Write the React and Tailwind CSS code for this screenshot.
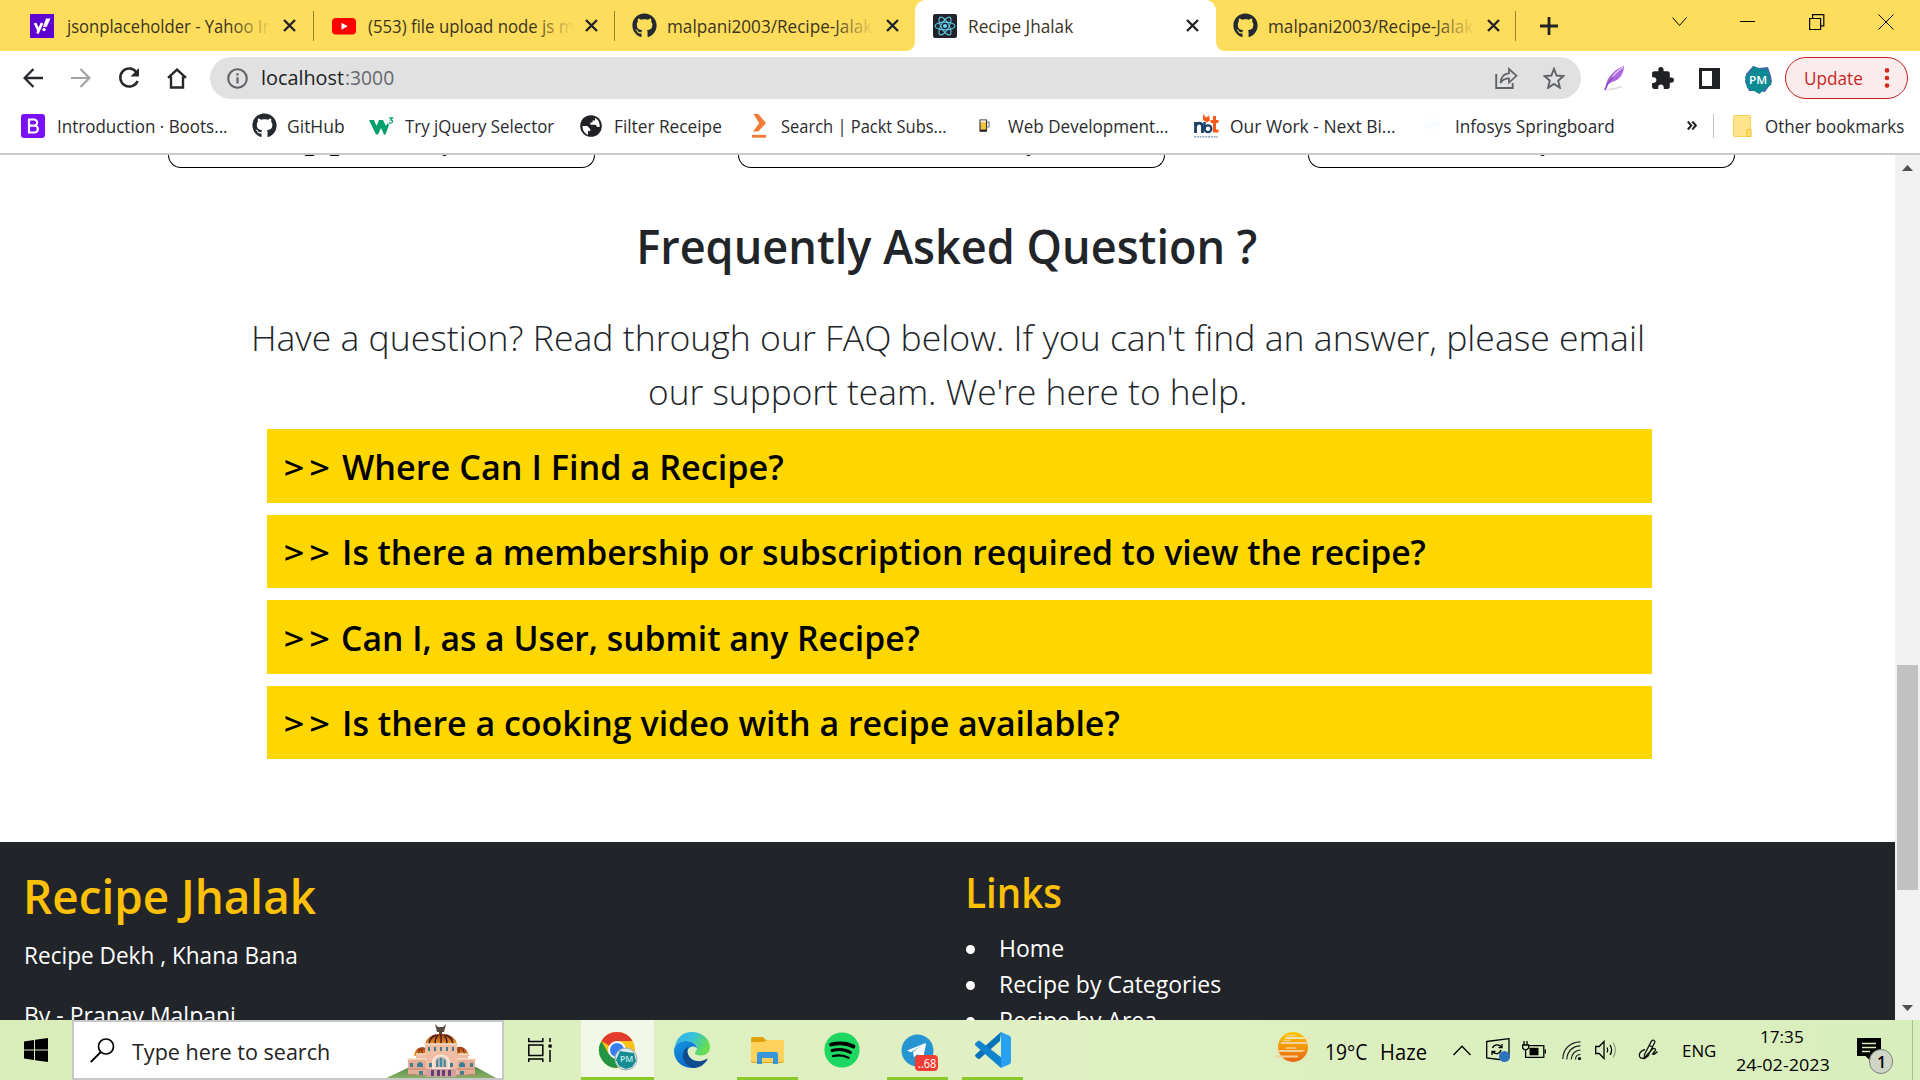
import React, { useLayoutEffect, useRef, useState } from "react";
import { FaGithub } from "react-icons/fa";
import { MdExtension } from "react-icons/md";

// Text whose inked glyphs fill exactly `w` pixels.
function Fit({ w, className = "", children }) {
  const ref = useRef(null);
  const [t, setT] = useState("none");
  useLayoutEffect(() => {
    const cs = getComputedStyle(ref.current);
    const ctx = document.createElement("canvas").getContext("2d");
    ctx.font = `${cs.fontWeight} ${cs.fontSize} ${cs.fontFamily}`;
    if (cs.letterSpacing !== "normal") ctx.letterSpacing = cs.letterSpacing;
    const m = ctx.measureText(children);
    const s = w / (m.actualBoundingBoxRight + m.actualBoundingBoxLeft);
    setT(`translateX(${m.actualBoundingBoxLeft * s}px) scaleX(${s})`);
  }, [w, children]);
  return (
    <span className={"block shrink-0 whitespace-nowrap " + className} style={{ width: w }}>
      <span ref={ref} className="inline-block origin-left whitespace-pre" style={{ transform: t }}>{children}</span>
    </span>
  );
}

const Svg = ({ w, h, vb, className = "", children }) => (
  <svg width={w} height={h} viewBox={vb || `0 0 ${w} ${h}`} preserveAspectRatio="none" fill="none" className={"block shrink-0 " + className}>{children}</svg>
);

const CloseX = () => (
  <Svg w={13} h={13}><path d="M1 1L12 12M12 1L1 12" stroke="#222326" strokeWidth="2.4" /></Svg>
);

const Yahoo = () => (
  <Svg w={24} h={24}>
    <rect width="24" height="24" fill="#5f01d1" />
    <path d="M5 9l3.4 7.2M12 9L7.4 19.5" stroke="#fff" strokeWidth="2.7" />
    <path d="M16 4.5h4.5L16.6 13H13z" fill="#fff" /><circle cx="14" cy="15.6" r="1.7" fill="#fff" />
  </Svg>
);
const Youtube = () => (
  <Svg w={24} h={24}><rect y="4" width="24" height="16.5" rx="4" fill="#f00" /><path d="M9.5 8.8v7l6-3.5z" fill="#fff" /></Svg>
);
const ReactIcon = () => (
  <Svg w={24} h={24}>
    <rect width="24" height="24" rx="2" fill="#20232a" />
    <g stroke="#61c9e6" strokeWidth="1.1"><ellipse cx="12" cy="12" rx="10" ry="3.9" /><ellipse cx="12" cy="12" rx="10" ry="3.9" transform="rotate(60 12 12)" /><ellipse cx="12" cy="12" rx="10" ry="3.9" transform="rotate(120 12 12)" /></g>
    <circle cx="12" cy="12" r="2" fill="#61dafb" />
  </Svg>
);
const Git = () => <FaGithub size={25} color="#24292f" className="shrink-0 -mr-px" />;

function Tab({ icon, text, w, active, pad = "pl-[17.5px]" }) {
  return (
    <div className={"relative flex h-[51px] w-[300.4px] shrink-0 items-center " + pad + (active ? " bg-white rounded-t-[11px]" : "")}>
      {active && (
        <>
          <Svg w={10} h={10} className="absolute -left-[10px] bottom-0"><path d="M10 0v10H0Q10 10 10 0" fill="#fff" /></Svg>
          <Svg w={10} h={10} className="absolute -right-[10px] bottom-0"><path d="M0 0v10h10Q0 10 0 0" fill="#fff" /></Svg>
        </>
      )}
      {icon}
      <div className="relative ml-[12px] w-[206px] overflow-hidden">
        <Fit w={w} className="text-[17.5px] leading-[28px] text-[#3a341f]">{text}</Fit>
        {!active && <div className="absolute right-0 top-0 h-full w-[42px] bg-linear-to-r from-[#ffdd5c]/0 to-[#ffdd5c]" />}
      </div>
      <div className="ml-[11.5px]"><CloseX /></div>
    </div>
  );
}
const Sep = () => <div className="-ml-px h-[30px] w-px shrink-0 bg-[#93812f]" />;

function TabStrip() {
  return (
    <div className="flex h-[51px] items-center bg-[#ffdd5c] pl-[14px]">
      <Tab icon={<Yahoo />} text="jsonplaceholder - Yahoo In" w={206} pad="pl-[15.5px]" /><Sep />
      <Tab icon={<Youtube />} text="(553) file upload node js m" w={205} /><Sep />
      <Tab icon={<Git />} text="malpani2003/Recipe-Jalak" w={205} />
      <Tab icon={<ReactIcon />} text="Recipe Jhalak" w={105} active />
      <Tab icon={<Git />} text="malpani2003/Recipe-Jalak" w={205} /><Sep />
      <Svg w={18} h={18} className="ml-[24px]"><path d="M9 0v18M0 9h18" stroke="#222326" strokeWidth="2.8" /></Svg>
      <div className="mb-[8px] ml-[114px] flex items-center text-black">
        <Svg w={15} h={9}><path d="M.5.5l7 8 7-8" stroke="#000" /></Svg>
        <Svg w={15} h={2} className="ml-[53px]"><path d="M0 .5h15" stroke="#000" /></Svg>
        <Svg w={16} h={16} className="ml-[54px]"><path d="M.6 4.5h11v11H.6zM3.6 4V.6h11.2v11.2H12" stroke="#000" strokeWidth="1.2" /></Svg>
        <Svg w={16} h={16} className="ml-[53px]"><path d="M.5.5l15 15M15.5.5l-15 15" stroke="#000" /></Svg>
      </div>
    </div>
  );
}

function Toolbar() {
  return (
    <div className="flex h-[54px] items-center bg-white pl-[23px]">
      <Svg w={20} h={20}><path d="M20 10H2M10.5 1L1.6 10l8.9 9" stroke="#26282b" strokeWidth="2.3" /></Svg>
      <Svg w={20} h={20} className="ml-[28px]"><path d="M0 10h18M9.5 1l8.9 9-8.9 9" stroke="#a3a3a3" strokeWidth="2.2" /></Svg>
      <Svg w={22} h={22} className="ml-[27px]"><path d="M18.5 5.2A9 9 0 1 0 19.6 14" stroke="#26282b" strokeWidth="2.5" /><path d="M21 1v8.500h-8.500z" fill="#26282b" /></Svg>
      <Svg w={20} h={21} className="ml-[27px]"><path d="M1 9.800L10 1.600l9 8.200M4 8.500v11h12v-11" stroke="#26282b" strokeWidth="2.400" /></Svg>
      <div className="ml-[23px] flex h-[42px] w-[1371px] items-center rounded-full bg-[#e1e1e1] pl-[17px]">
        <Svg w={21} h={21}><circle cx="10.5" cy="10.5" r="9.3" stroke="#5f6368" strokeWidth="2.1" /><path d="M10.5 9.200v6.300M10.500 5.200v2.200" stroke="#5f6368" strokeWidth="2.2" /></Svg>
        <div className="ml-[14px] flex text-[19.5px] leading-[30px]">
          <Fit w={82} className="text-[#202124]">localhost</Fit>
          <Fit w={48} className="ml-[2px] text-[#66696d]">:3000</Fit>
        </div>
        <Svg w={23} h={22} className="ml-[1101px]"><path d="M1.200 7v14h16.500v-5" stroke="#5f6368" strokeWidth="1.9" /><path d="M5.500 16C6 9.500 9.500 6.500 14 6.300V2l7.500 6.800-7.500 6.800v-4.200c-4 0-6.500 1.400-8.500 4.600z" stroke="#5f6368" strokeWidth="1.7" /></Svg>
        <Svg w={22} h={22} className="ml-[25px]" vb="1 1 22 21"><path d="M12 2.800l2.600 6.400 6.900.5-5.300 4.400 1.700 6.700-5.900-3.700-5.900 3.700 1.700-6.700-5.300-4.400 6.900-.5z" stroke="#5f6368" strokeWidth="1.9" /></Svg>
      </div>
      <Svg w={22} h={26} className="ml-[23px]">
        <path d="M2 20C3 12 11 4 20 1c0 7-4 14-12 16z" fill="#ab6bdc" /><path d="M5 17C8 12 13 6 19 2" stroke="#e6d0f7" strokeWidth="1.300" /><path d="M1 25C3 19 6 15 9 12" stroke="#8b3fc4" strokeWidth="1.600" /><path d="M3 24.500c6 0 11-1.500 15-3" stroke="#ddd" strokeWidth="1.500" />
      </Svg>
      <MdExtension size={25} color="#202124" className="ml-[24px] shrink-0" />
      <Svg w={21} h={21} className="ml-[24px]"><path d="M0 0h21v21H0zM3 3v15h10V3z" fill="#202124" fillRule="evenodd" /></Svg>
      <div className="relative ml-[24px] mt-[3px] flex h-[28px] w-[28px] items-center justify-center">
        <Svg w={28} h={30} className="absolute inset-0 -top-px"><path d="M2 9L9 1l6 2 9-1 3 9 1 6-7 10-7-1-9 0-4-9z" fill="#4169ae" /><path d="M9 1l7 3 8.500 1.500 1 8 2 6-7 4.500-5 5-7.500-4-5-2-1-8.500L1 12l6-5z" fill="#0b8a93" /></Svg>
        <Fit w={17} className="relative text-[11px] font-semibold leading-[28px] text-white">PM</Fit>
      </div>
      <div className="ml-[13px] flex h-[42px] w-[123px] items-center rounded-full border-[1.5px] border-[#c5221f] bg-[#faecec] pl-[19px]">
        <Fit w={57} className="text-[17.5px] leading-[28px] text-[#c5271f]">Update</Fit>
        <Svg w={6} h={20} className="ml-[22px]"><g fill="#d42a20"><circle cx="3" cy="2.4" r="2.3" /><circle cx="3" cy="10" r="2.3" /><circle cx="3" cy="17.6" r="2.3" /></g></Svg>
      </div>
    </div>
  );
}

function Bookmarks() {
  return (
    <div className="flex h-[50px] items-center border-b-2 border-[#cbcbcb] bg-white pb-[7px] pl-[21px] text-[17.5px] leading-[28px] text-[#2a2b2e]">
      <Svg w={24} h={24}><rect width="24" height="24" rx="3" fill="#7a10f7" /><path d="M8 5.500h5a3.100 3.100 0 0 1 0 6.200H8zM8 11.700h5.500a3.400 3.400 0 0 1 0 6.800H8z" stroke="#fff" strokeWidth="2.2" /></Svg>
      <Fit w={169} className="ml-[13px]">Introduction · Boots...</Fit>
      <div className="ml-[25px]"><Git /></div>
      <Fit w={56} className="ml-[12px]">GitHub</Fit>
      <Svg w={25} h={18} className="ml-[25px]"><path d="M0 3h5l2.500 6L10 3h4l3 6 1.800-3L20 8l-3.500 9.500H15L12 11l-3 6.500H7z" fill="#04a06b" /><path d="M20 .9h3.500L21.600 3c3 0 2.600 4-1.800 2.900" stroke="#04a06b" strokeWidth="1.2" /></Svg>
      <Fit w={149} className="ml-[11px]">Try jQuery Selector</Fit>
      <Svg w={22} h={22} className="ml-[26px]"><circle cx="11" cy="11" r="10.8" fill="#202124" /><path d="M2.500 11h4.800l3 3v2H8v4C4.500 18.500 2.500 15 2.500 11zM15 3c4 2 5 5.500 4.600 9h-2.200l-2-2.200h-5V7.600h2.200V5.400H15z" fill="#fff" /></Svg>
      <Fit w={106} className="ml-[13px]">Filter Receipe</Fit>
      <Svg w={15} h={24} className="ml-[31px]"><path d="M1.500 0h4.800l7.700 9-7.700 8.500H1l6.200-8.300z" fill="#f47b35" /><path d="M0 22.300h14" stroke="#f47b35" strokeWidth="2.8" /></Svg>
      <Fit w={165} className="ml-[14px]">Search | Packt Subs...</Fit>
      <Svg w={11} h={13} className="ml-[33px]"><rect x="1" y="1" width="6.5" height="11" fill="#f4c33d" stroke="#2c2c2c" strokeWidth="1.1" /><path d="M1.500 2.300h5.500" stroke="#eee" strokeWidth="1.800" /><path d="M7.500 3h2.500v5H7.500" stroke="#777" strokeWidth="1.1" /><path d="M1 11.600h6.500" stroke="#222" strokeWidth="2" /></Svg>
      <Fit w={160} className="ml-[18px]">Web Development...</Fit>
      <Svg w={25} h={24} className="ml-[26px]"><path d="M1.500 19V8M1.500 12c2-4 7-4 7 1v6" stroke="#1d4166" strokeWidth="2.8" /><path d="M10.500 8v7" stroke="#1d4166" strokeWidth="2.400" /><circle cx="14" cy="14.800" r="3.400" stroke="#1d4166" strokeWidth="2.300" /><path d="M9 6V0l3 3.500 3-2 1 5-3 2z" fill="#fa5a1c" /><path d="M20.500 2v15h4M16.500 7.500h8" stroke="#fa5a1c" strokeWidth="3" /><path d="M0 22.800h24" stroke="#7894ac" strokeWidth="1.3" strokeDasharray="2 .8" /></Svg>
      <Fit w={164} className="ml-[12px]">Our Work - Next Bi...</Fit>
      <Svg w={20} h={20} className="ml-[27px]"><circle cx="10" cy="10" r="9.5" fill="#fcfdff" /><path d="M4 11c4-3 5 3 7-2s4 1 5 0" stroke="#f3f6fb" /></Svg>
      <Fit w={158} className="ml-[14px]">Infosys Springboard</Fit>
      <Svg w={10} h={9} className="ml-[73px] mb-[1px]"><path d="M.8.5l3.500 4-3.500 4M5.300.5l3.500 4-3.500 4" stroke="#202124" strokeWidth="2" /></Svg>
      <div className="ml-[16px] h-[24px] w-px shrink-0 bg-[#c4c4c4]" />
      <Svg w={19} h={22} className="ml-[19px]"><rect x=".5" y=".5" width="17" height="21" rx="1" fill="#ffe48b" stroke="#f6d254" /><path d="M14 21.500V15l4-.7v7.200z" fill="#ffe06c" stroke="#ecc030" /></Svg>
      <Fit w={138} className="ml-[14px]">Other bookmarks</Fit>
    </div>
  );
}

// Descender tips of the card titles, as offsets and widths inside each card.
const cards = [
  [[135, 11], [160, 11], [273, 5]],
  [[287, 5]],
  [[231, 5]],
];
const faqs = [
  ["Where Can I Find a Recipe?", 441, "ml-[13px]"],
  ["Is there a membership or subscription required to view the recipe?", 1080, "ml-[16px]"],
  ["Can I, as a User, submit any Recipe?", 576, "ml-[14px]"],
  ["Is there a cooking video with a recipe available?", 774, "ml-[16px]"],
];
const links = [["Home", 62], ["Recipe by Categories", 220], ["Recipe by Area", 155]];

function Page() {
  return (
    <div className="flex h-[865px] w-[1895px] flex-col overflow-hidden bg-white text-[#212529]">
      <div className="flex h-[13px] shrink-0 gap-[143px] pl-[168px]">
        {cards.map((tips, i) => (
          <div key={i} className="h-[13px] w-[427px] overflow-hidden rounded-b-[14px] border border-t-0 border-black">
            <Svg w={425} h={2}>
              {tips.map(([x, w]) => <path key={x} d={`M${x} 0h${w}l-2 1h${4 - w}z`} fill="#000" />)}
            </Svg>
          </div>
        ))}
      </div>
      <h1 className="mt-[49px] flex justify-center pl-[2px] text-[47px] font-semibold leading-[58px]"><Fit w={617}>Frequently Asked Question ?</Fit></h1>
      <div className="mt-[36px] flex flex-col items-center text-[35px] font-[360] leading-[54px]">
        <Fit w={1388}>Have a question? Read through our FAQ below. If you can't find an answer, please email</Fit>
        <Fit w={595}>our support team. We're here to help.</Fit>
      </div>
      <div className="ml-[267px] mt-[10px] flex w-[1385px] flex-col gap-[12px]">
        {faqs.map(([q, w, ml]) => (
          <div key={q} className="flex h-[73.5px] items-center bg-[#ffd700] pl-[18px] pt-[2px] text-[35px] font-[560] leading-[54px] text-black">
            <Fit w={44} className="text-[31px] font-semibold tracking-[4px]">{">>"}</Fit>
            <Fit w={w} className={ml}>{q}</Fit>
          </div>
        ))}
      </div>
      <footer className="mt-[83px] flex h-[200px] shrink-0 bg-[#212529] pl-[26px] pt-[25px] text-white">
        <div className="w-[941px]">
          <Fit w={289} className="ml-px text-[47px] font-semibold leading-[58px] text-[#ffc107]">Recipe Jhalak</Fit>
          <Fit w={271} className="mt-[12px] text-[23.3px] leading-[36px]">Recipe Dekh , Khana Bana</Fit>
          <Fit w={209} className="mt-[24px] text-[23.3px] leading-[36px]">By - Pranav Malpani</Fit>
        </div>
        <div>
          <Fit w={93} className="ml-px text-[41px] font-semibold leading-[50px] text-[#ffc107]">Links</Fit>
          <ul className="mt-[13px]">
            {links.map(([l, w]) => (
              <li key={l} className="flex h-[36px] items-center gap-[26px] text-[23.3px] leading-[36px]">
                <span className="mt-[3px] h-[9px] w-[9px] -ml-px rounded-full bg-white" />
                <Fit w={w}>{l}</Fit>
              </li>
            ))}
          </ul>
        </div>
      </footer>
    </div>
  );
}

function Scrollbar() {
  return (
    <div className="flex h-[865px] w-[25px] flex-col items-center bg-[#f1f1f1]">
      <Svg w={11} h={6} className="mt-[10px]"><path d="M0 6L5.500 0 11 6z" fill="#505050" /></Svg>
      <div className="mt-[494px] h-[225px] w-[21px] bg-[#c1c1c1]" />
      <Svg w={11} h={6} className="mt-[115px]"><path d="M0 0l5.500 6L11 0z" fill="#505050" /></Svg>
    </div>
  );
}

const Palace = () => (
  <Svg w={118} h={57}>
    <defs>
      <linearGradient id="hill" x1="0" y1="0" x2="0" y2="1"><stop offset="0" stopColor="#4d8a45" /><stop offset="1" stopColor="#93b56c" /></linearGradient>
      <linearGradient id="dome" x1="0" y1="0" x2="0" y2="1"><stop offset="0" stopColor="#a33416" /><stop offset="1" stopColor="#f3a32a" /></linearGradient>
    </defs>
    <path d="M0 57L30 43h62l26 14z" fill="url(#hill)" />
    <path d="M53 1l3 3h5l3-3-2 8h-2v4h-3V9h-2z" fill="#57483f" />
    <path d="M43 22C44 7 74 7 75 22z" fill="url(#dome)" /><path d="M47 21c1-6 4-8 7-9M53 21c0-5 2-8 3-9M59 21V11M65 21c0-5-2-8-3-9M71 21c-1-6-4-8-7-9" stroke="#3e1d16" strokeWidth="1.4" />
    <path d="M32 33c1-10 10-10 13-7v7zM73 33v-7c3-4 12-3 14 7z" fill="url(#dome)" /><path d="M36 32l2-6M40 32v-6M77 32v-6M83 32l-2-6" stroke="#5b2717" />
    <path d="M43 21h32v12H43z" fill="#efbea2" /><path d="M42 21h34" stroke="#f9dcc5" strokeWidth="1.5" />
    <path d="M34 31h52v21H34z" fill="#edbca2" /><path d="M26 36h18v15H26zM76 36h17v15H76z" fill="#e4ad95" /><path d="M25 36h20M75 36h19M34 31h10M76 31h10" stroke="#f9dcc5" strokeWidth="1.6" />
    <g fill="#3b7d92"><path d="M46 24h2v4h-2zM52 24h2v4h-2zM58 24h2v4h-2zM64 24h2v4h-2zM70 24h2v4h-2z" /><path d="M35 44v-3q3-4 6 0v3zM77 44v-3q3-4 6 0v3zM37 48h4v4h-4zM78 48h4v4h-4zM28 40h3v4h-3zM88 40h3v4h-3zM47 40h3v4h-3zM68 40h3v4h-3z" /></g>
    <path d="M51 46v-7c0-9 16-9 16 0v7z" fill="#f4d3c4" stroke="#fbe8dc" strokeWidth="1.5" /><path d="M54 44v-5c0-6 10-6 10 0v5z" fill="#4a8898" /><path d="M57 35v9M61 35v9" stroke="#f6d7c8" />
    <path d="M44 46h30v8H44z" fill="#d2a0a0" /><path d="M49 47h3v6h-3zM55 47h3v6h-3zM60 47h3v6h-3zM66 47h3v6h-3z" fill="#624072" /><path d="M25 46h19M74 46h19M24 52h20M74 52h20" stroke="#c68677" />
  </Svg>
);

const Chrome = () => (
  <div className="relative">
    <Svg w={40} h={40} className="-mr-[1px]">
      <circle cx="19" cy="19" r="18" fill="#fbc116" />
      <path d="M19 19L3.400 10A18 18 0 0 1 34.600 10H19z" fill="#e33b2e" />
      <path d="M3.400 10A18 18 0 0 0 19 37l8-13.500-16 0z" fill="#229645" />
      <circle cx="19" cy="19" r="9" fill="#fff" /><circle cx="19" cy="19" r="7" fill="#3a7df0" />
      <circle cx="28" cy="28" r="11" fill="#dce9ec" stroke="#9cabad" /><path d="M22 20l6 1 8 1 2 8-4 6-6 2-7-3-3-6z" fill="#168b92" />
    </Svg>
    <Fit w={13} className="absolute left-[22px] top-[21px] text-[9px] font-semibold leading-[14px] text-[#c0ebea]">PM</Fit>
  </div>
);
const Edge = () => (
  <Svg w={36} h={36} className="-ml-[2px]">
    <defs>
      <linearGradient id="e1" x1="0" y1="0" x2="1" y2=".4"><stop offset="0" stopColor="#2db2ec" /><stop offset=".5" stopColor="#35c1db" /><stop offset="1" stopColor="#67de4f" /></linearGradient>
      <linearGradient id="e2" x1="0" y1="0" x2=".6" y2="1"><stop offset="0" stopColor="#1496e2" /><stop offset="1" stopColor="#0968c5" /></linearGradient>
    </defs>
    <path d="M1 15C2 6 9 0 18 0c10 0 18 7 18 15 0 5-4 8.500-9 8.500-4 0-6-1-6-2.500 0-1 2-2 2-5C23 12 18 9 12 9 6 9 2 12 1 15z" fill="url(#e1)" />
    <path d="M0 19C0 13 5 9 12 9c6 0 11 3.500 11 7.500-2-3-8-3-10 3-2 7 2 13 9 16C9 38 0 29 0 19z" fill="url(#e2)" />
    <path d="M14 15c-2 7 2 13 9 14 4 .6 7-.5 9.500-2 .8-.4 1.200.2.700 1C30 33 25 36 20 36 12 35 8 27 9 22c.5-3 2-6 5-7z" fill="#114a8e" />
  </Svg>
);
const Folder = () => (
  <Svg w={33} h={27}><path d="M0 2Q0 0 2 0h10l3 3h16q2 0 2 2v19q0 2-2 2H2q-2 0-2-2z" fill="#e3a20c" /><path d="M0 5h13l3-2h15q2 0 2 2v18q0 2-2 2H2q-2 0-2-2z" fill="#ffd25e" /><path d="M6 27V17q0-2 2-2h17q2 0 2 2v10h-5v-6H11v6z" fill="#3a96db" /></Svg>
);
const Spotify = () => (
  <Svg w={36} h={36}><circle cx="18" cy="18" r="17.6" fill="#1ed760" /><g stroke="#000" strokeLinecap="round"><path d="M7 12.500c8-2 16-1.500 22.500 2" strokeWidth="3.7" /><path d="M8 18.500c7-1.700 13.500-1 18.500 2" strokeWidth="3" /><path d="M9 24c6-1.300 11-.8 15.500 1.800" strokeWidth="2.3" /></g></Svg>
);
const Telegram = () => (
  <div className="relative">
    <Svg w={33} h={33}><circle cx="16.5" cy="16.5" r="16" fill="#2795d1" /><path d="M6 16.500L24 9.300q1.300-.4 1 1L22 24.500l-6-4.200-3 3-1-5.300 9-7L10 18.200z" fill="#fff" /></Svg>
    <div className="absolute left-[14px] top-[21px] flex h-[16px] w-[23px] items-center justify-center rounded-[4px] bg-[#f23c34]">
      <Fit w={18} className="text-[13px] leading-[16px] text-white">..68</Fit>
    </div>
  </div>
);
const VSCode = () => (
  <Svg w={36} h={36}><path d="M26 0l-1 9L5 26.500q-1.500 1-2.500 0l-2-2q-1-1 0-2z" fill="#0873b9" /><path d="M0 11.500l3-2.500q1-.8 2 0L27 26l-1 10L1 14q-1.500-1.200-1-2.500z" fill="#1184cf" /><path d="M26 0l8.500 3.800Q36 4.500 36 6v24q0 1.500-1.500 2.200L26 36z" fill="#29a1f2" /></Svg>
);

function TaskButton({ children, className = "", bar }) {
  return (
    <div className={"flex h-[60px] w-[61px] shrink-0 flex-col items-center " + className}>
      <div className="flex h-[57px] items-center pt-[3px]">{children}</div>
      <div className={"h-[3px] w-full " + (bar ? "bg-[#89c929]" : "")} />
    </div>
  );
}

function Taskbar() {
  return (
    <div className="flex h-[60px] w-full items-center bg-linear-to-r from-[#d9ecb9] via-[#e0f0c4] to-[#d9eebd] text-black">
      <Svg w={24} h={24} className="ml-[24px]"><path d="M0 3.500L10 2v9.500H0zM11 1.800L24 0v11.500H11zM0 12.500h10V22L0 20.600zM11 12.500h13V24l-13-1.800z" fill="#000" /></Svg>
      <div className="ml-[24px] flex h-[60px] w-[432px] items-center overflow-hidden border-2 border-[#c8c8c8] bg-white">
        <Svg w={25} h={25} className="ml-[16px]"><circle cx="16" cy="8.5" r="7.5" stroke="#000" strokeWidth="1.7" /><path d="M10.800 14L.8 24" stroke="#000" strokeWidth="1.8" /></Svg>
        <Fit w={197} className="ml-[17px] pt-[4px] text-[21.5px] leading-[32px] text-[#222]">Type here to search</Fit>
        <div className="ml-[53px] -mr-1 mt-[2px]"><Palace /></div>
      </div>
      <Svg w={24} h={24} className="ml-[24px]"><path d="M.8 0v3.500h14V0M.8 7h14v10.500h-14zM.8 24v-3h14v3M22 0v4M22 12v12" stroke="#000" strokeWidth="1.5" /><path d="M20.500 6.500h3.200v3.200h-3.200z" fill="#000" /></Svg>
      <div className="ml-[29px] flex h-[60px] w-[73px] shrink-0 flex-col bg-[#f2f8e7]">
        <div className="flex h-[57px] pl-[17px] pt-[11px]"><Chrome /></div>
        <div className="h-[3px] bg-[#89c929]" />
      </div>
      <TaskButton className="ml-[8px]"><Edge /></TaskButton>
      <TaskButton className="ml-[14px]" bar><Folder /></TaskButton>
      <TaskButton className="ml-[13px]"><Spotify /></TaskButton>
      <TaskButton className="ml-[15px]" bar><Telegram /></TaskButton>
      <TaskButton className="ml-[14px]" bar><VSCode /></TaskButton>
      <Svg w={36} h={32} className="mb-[6px] ml-[252px]">
        <defs><linearGradient id="sun" x1="0" y1="0" x2="0" y2="1"><stop offset="0" stopColor="#fbc800" /><stop offset="1" stopColor="#e96410" /></linearGradient></defs>
        <circle cx="18" cy="16" r="15" fill="url(#sun)" />
        <path d="M11 7h25" stroke="#f1e0ae" strokeWidth="2" strokeLinecap="round" /><path d="M7 12h25M3 20h24M1 25.500h21" stroke="#f3cf9c" strokeWidth="2" strokeLinecap="round" /><path d="M12 4.500h8M9 9.500h6M11 17h10M24 19.500h5" stroke="#f8d183" strokeWidth="1.300" strokeLinecap="round" />
      </Svg>
      <Fit w={41} className="ml-[15px] pt-[4px] text-[21.5px] leading-[32px]">19°C</Fit>
      <Fit w={44} className="ml-[15px] pt-[4px] text-[21.5px] leading-[32px]">Haze</Fit>
      <Svg w={18} h={11} className="ml-[27px]"><path d="M.5 10L9 1.200l8.500 8.800" stroke="#000" strokeWidth="1.3" /></Svg>
      <Svg w={25} h={24} className="ml-[15px]"><path d="M.7 3.500L23 .7v19L13 21.500.7 20z" stroke="#000" strokeWidth="1.3" /><path d="M6.500 10c1.500-4 7-4 9-1M16 6v3.500h-3.500M15 12c-1 4-6 5-8.500 1.500M6 17v-3.500h3.500" stroke="#000" strokeWidth="1.3" /><circle cx="18.500" cy="18.500" r="5.500" fill="#2d73bd" /></Svg>
      <Svg w={24} h={18} className="ml-[11px] mb-px"><path d="M5 4.700h16.800v11.600H3.600V9M23.400 8.500v4" stroke="#000" strokeWidth="1.3" /><path d="M7.500 6.800h9v7.500h-9z" fill="#000" /><path d="M2 0v4M5 0v4M.6 4h6v3q-3 3.600-6 0z" stroke="#000" strokeWidth="1.3" fill="#dfefc4" /></Svg>
      <Svg w={20} h={19} className="ml-[16px]"><path d="M.8 18C1 8 8 1 18.500.8M4.800 18.500C5 10.500 10.500 5 18.500 4.800M9.200 18.500c.2-5.500 4-9.300 9.300-9.500M13.500 18.500c0-3 2-5 5-5" stroke="#222" strokeWidth="1.2" /><circle cx="17.500" cy="17.500" r="1.6" fill="#000" /></Svg>
      <Svg w={24} h={20} className="ml-[13px]"><path d="M.7 6.500h3.500L9 1.500v17L4.200 13.500H.7z" stroke="#000" strokeWidth="1.3" /><path d="M12 7.500q1.500 2.500 0 5M15 5q3.200 5 0 10" stroke="#000" strokeWidth="1.3" /><path d="M18 2.500q5 7.500 0 15" stroke="#90a17a" strokeWidth="1.2" /></Svg>
      <Svg w={22} h={22} className="ml-[19px]"><path d="M6.500 15.500L13.500 2q2.200-2 3.500.8L10 17l-3.500 2.500zM11.500 6.500l3.500 2M7 10.500c-4 1-6.500 4-5.500 7 1.500 3 5 2 7-1l6-6.500c2-1.500 4 0 2.500 2l-2.500 3q1 1.500 5-2.500" stroke="#111" strokeWidth="1.3" /></Svg>
      <Fit w={33} className="ml-[23px] pt-px text-[17px] leading-[28px]">ENG</Fit>
      <div className="ml-[19px] mt-px flex w-[94px] flex-col items-center text-[17px] leading-[28px]">
        <Fit w={42}>17:35</Fit>
        <Fit w={93}>24-02-2023</Fit>
      </div>
      <div className="relative ml-[28px] mt-[12px] h-[36px] w-[38px]">
        <Svg w={24} h={24}><path d="M0 0h24v18H14.500v6L8.500 18H0z" fill="#000" /><path d="M5 5.500h14M5 9.500h14M5 13.500h8" stroke="#dcedbf" strokeWidth="1.4" /></Svg>
        <div className="absolute left-[12px] top-[11px] flex h-[25px] w-[24px] items-center justify-center rounded-full border border-[#7c8375] bg-[#d0d6c6]">
          <Fit w={6} className="text-[16px] font-semibold leading-[24px]">1</Fit>
        </div>
      </div>
      <div className="ml-[17px] h-[60px] w-px bg-[#a9bd90]" />
    </div>
  );
}

export default function App() {
  return (
    <div className="flex h-[1080px] w-[1920px] flex-col overflow-hidden bg-white font-['Open_Sans','Noto_Sans',sans-serif]">
      <TabStrip />
      <Toolbar />
      <Bookmarks />
      <div className="flex h-[865px] shrink-0">
        <Page />
        <Scrollbar />
      </div>
      <Taskbar />
    </div>
  );
}
